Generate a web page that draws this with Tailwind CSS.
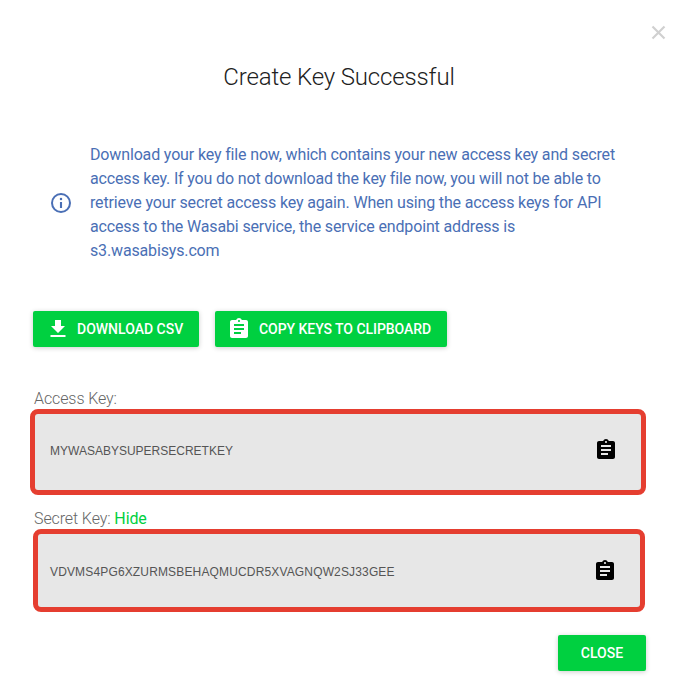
<!DOCTYPE html>
<html>
<head>
<meta charset="utf-8">
<script src="https://cdn.jsdelivr.net/npm/@tailwindcss/browser@4"></script>
</head>
<body class="bg-white">
<div class="relative w-[684px] h-[686px] overflow-hidden font-['Roboto',sans-serif] bg-white">
  <svg class="absolute left-[651px] top-[25px] w-[15px] h-[15px]" viewBox="0 0 15 15" fill="none" stroke="#d0d0d0" stroke-width="2.2"><path d="M1.5 1.5 13.5 13.5M13.5 1.5 1.5 13.5"/></svg>

  <div class="pt-[62px] pl-[34px] pr-[38px] flex flex-col">
    <h1 class="h-[30px] leading-[30px] text-center text-[24px] font-light tracking-[-0.15px] text-[#212121] ml-[-2px]">Create Key Successful</h1>

    <div class="mt-[51px] flex items-center">
      <svg class="w-[24px] h-[24px] ml-[15px] mr-[17px] shrink-0" viewBox="0 0 24 24" fill="none" stroke="#4a6fb5"><circle cx="12" cy="12" r="9" stroke-width="2"/><circle cx="12" cy="8" r="1.25" fill="#4a6fb5" stroke="none"/><path d="M12 11v6" stroke-width="2.1"/></svg>
      <p class="w-[540px] text-[16px] leading-[24px] tracking-[-0.15px] text-[#4a6fb5]">Download your key file now, which contains your new access key and secret access key. If you do not download the key file now, you will not be able to retrieve your secret access key again. When using the access keys for API access to the Wasabi service, the service endpoint address is s3.wasabisys.com</p>
    </div>

    <div class="mt-[48px] ml-[-1px] flex gap-4">
      <button class="h-[36px] w-[166px] rounded-[2px] bg-[#00d040] shadow-[0_1px_5px_rgba(0,0,0,0.2)] text-white text-[14px] font-medium flex items-center pl-[15px]">
        <svg class="w-[20px] h-[20px] mr-[9px] shrink-0" viewBox="0 0 20 20" fill="#fff"><path d="M7 2h6v6h4l-7 7-7-7h4z" transform="translate(0 -1)"/><rect x="2.500" y="16" width="15" height="2"/></svg>
        DOWNLOAD CSV
      </button>
      <button class="h-[36px] w-[232px] rounded-[2px] bg-[#00d040] shadow-[0_1px_5px_rgba(0,0,0,0.2)] text-white text-[14px] font-medium tracking-[-0.05px] flex items-center pl-[12px]">
        <svg class="w-[24px] h-[24px] mr-[8px] shrink-0" viewBox="0 0 24 24" fill="#fff"><path d="M19 3h-4.180C14.400 1.840 13.300 1 12 1s-2.400.84-2.820 2H5c-1.100 0-2 .9-2 2v14c0 1.100.9 2 2 2h14c1.100 0 2-.9 2-2V5c0-1.100-.9-2-2-2zm-7 0c.55 0 1 .45 1 1s-.45 1-1 1-1-.45-1-1 .45-1 1-1zm2 14H7v-2h7v2zm3-4H7v-2h10v2zm0-4H7V7h10v2z"/></svg>
        COPY KEYS TO CLIPBOARD
      </button>
    </div>

    <div class="mt-[40px] h-[24px] leading-[24px] text-[16px] font-light tracking-[-0.1px] text-[#666]">Access Key:</div>
    <div class="relative mt-[-2px] ml-[-4px] w-[616px] h-[86px] rounded-[8px] border-[5px] border-[#e53e30] bg-[#e7e7e7] flex items-center justify-between pl-[15px] pr-[23px] pb-[2px] font-['Liberation_Sans',sans-serif] text-[12px] text-[#555]">
      <span>MYWASABYSUPERSECRETKEY</span>
      <svg class="w-[24px] h-[24px] shrink-0 mb-[2px]" viewBox="0 0 24 24" fill="#000"><path d="M19 3h-4.180C14.400 1.840 13.300 1 12 1s-2.400.84-2.820 2H5c-1.100 0-2 .9-2 2v14c0 1.100.9 2 2 2h14c1.100 0 2-.9 2-2V5c0-1.100-.9-2-2-2zm-7 0c.55 0 1 .45 1 1s-.45 1-1 1-1-.45-1-1 .45-1 1-1zm2 14H7v-2h7v2zm3-4H7v-2h10v2zm0-4H7V7h10v2z"/></svg>
    </div>

    <div class="mt-[12px] h-[24px] leading-[24px] text-[16px] font-light tracking-[-0.1px] text-[#666]">Secret Key: <span class="font-normal text-[#00d040]">Hide</span></div>
    <div class="relative mt-[-2px] ml-[-1px] w-[612px] h-[83px] rounded-[8px] border-[5px] border-[#e53e30] bg-[#e7e7e7] flex items-center justify-between pl-[12px] pr-[23px] font-['Liberation_Sans',sans-serif] text-[12px] text-[#555]">
      <span class="mt-[2px] tracking-[0.15px]">VDVMS4PG6XZURMSBEHAQMUCDR5XVAGNQW2SJ33GEE</span>
      <svg class="w-[24px] h-[24px] shrink-0" viewBox="0 0 24 24" fill="#000"><path d="M19 3h-4.180C14.400 1.840 13.300 1 12 1s-2.400.84-2.820 2H5c-1.100 0-2 .9-2 2v14c0 1.100.9 2 2 2h14c1.100 0 2-.9 2-2V5c0-1.100-.9-2-2-2zm-7 0c.55 0 1 .45 1 1s-.45 1-1 1-1-.45-1-1 .45-1 1-1zm2 14H7v-2h7v2zm3-4H7v-2h10v2zm0-4H7V7h10v2z"/></svg>
    </div>

    <div class="mt-[23px] flex justify-end w-[612px]">
      <button class="h-[36px] w-[88px] rounded-[2px] bg-[#00d040] shadow-[0_1px_5px_rgba(0,0,0,0.2)] text-white text-[14px] font-medium">CLOSE</button>
    </div>
  </div>
</div>
</body>
</html>
